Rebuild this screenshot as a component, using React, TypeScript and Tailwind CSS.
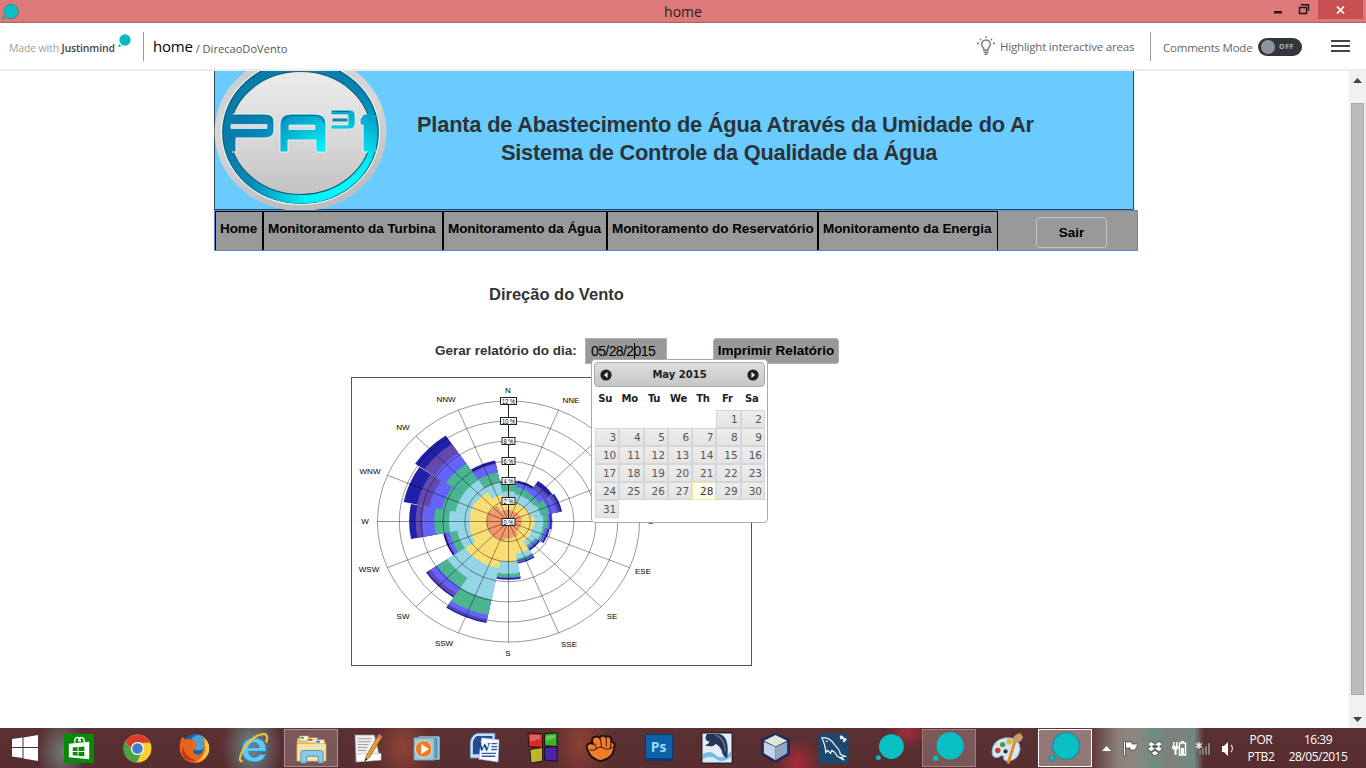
import React from "react";

const COLORS = ["#f5976a", "#fbdf75", "#94d5e6", "#4bb592", "#6464f8", "#6249b0", "#2020a8"];

// Cumulative percentages per direction, clockwise from north.
const ROSE: number[][] = [
  [1.2, 2.0, 3.0, 3.85, 3.9, 3.95, 4.05],
  [1.1, 1.95, 2.8, 3.5, 3.85, 3.95, 4.15],
  [1.15, 2.0, 2.8, 3.35, 4.1, 4.45, 4.85],
  [1.2, 2.1, 3.0, 3.8, 4.5, 4.8, 5.0],
  [1.2, 2.4, 3.2, 3.65, 3.8, 3.85, 3.98],
  [1.2, 2.3, 3.2, 3.4, 3.65, 3.7, 3.85],
  [1.2, 2.4, 2.9, 3.1, 3.3, 3.35, 3.5],
  [1.6, 3.3, 3.8, 4.0, 4.15, 4.18, 4.3],
  [1.7, 4.0, 5.2, 5.55, 5.62, 5.65, 5.8],
  [1.95, 4.75, 7.9, 9.5, 10.05, 10.15, 10.3],
  [2.0, 4.75, 6.75, 7.9, 8.6, 8.95, 9.1],
  [2.0, 3.65, 4.8, 5.5, 5.85, 5.95, 6.1],
  [2.0, 3.55, 5.45, 6.8, 7.9, 8.5, 9.1],
  [2.0, 3.6, 4.95, 6.2, 7.4, 8.55, 9.8],
  [1.9, 3.5, 4.95, 6.9, 8.2, 9.3, 10.3],
  [1.2, 2.7, 4.0, 5.0, 5.8, 5.95, 6.2],
];

const CX = 156.5;
const CY = 143.5;
const UX = 10.92;
const UY = 10.05;

function pt(r: number, deg: number) {
  const a = (deg * Math.PI) / 180;
  return `${(CX + r * UX * Math.sin(a)).toFixed(2)} ${(CY - r * UY * Math.cos(a)).toFixed(2)}`;
}

// The sector spans are widened slightly near the centre so inner bands join.
function wedge(r: number, dir: number, half: number) {
  const a = dir * 22.5;
  return `M${CX} ${CY}L${pt(r, a - half)}A${r * UX} ${r * UY} 0 0 1 ${pt(r, a + half)}Z`;
}

const LABELS: [string, number, number][] = [
  ["N", 156, 15], ["NNE", 219, 25], ["E", 299, 146], ["ESE", 291, 196], ["SE", 260, 241], ["SSE", 217, 269],
  ["S", 156, 278], ["SSW", 92, 268], ["SW", 51, 241], ["WSW", 17, 194], ["W", 13, 146], ["WNW", 18, 96],
  ["NW", 51, 52], ["NNW", 94, 24],
];

function WindRose() {
  return (
    <svg width="399" height="287" viewBox="0 0 399 287" className="block">
      {[6, 5, 4, 3, 2, 1, 0].map((k) =>
        ROSE.map((s, d) => <path key={`${d}-${k}`} d={wedge(s[k], d, k < 3 ? 11.4 : 11.1)} fill={COLORS[k]} />)
      )}
      <g fill="none" stroke="#000" strokeOpacity="0.45" strokeWidth="0.9">
        {[2, 4, 6, 8, 10, 12].map((r) => (
          <ellipse key={r} cx={CX} cy={CY} rx={r * UX} ry={r * UY} />
        ))}
        {Array.from({ length: 16 }, (_, i) => (
          <path key={i} d={`M${CX} ${CY}L${pt(12, i * 22.5)}`} />
        ))}
      </g>
      <path d={`M${CX} ${CY}V23`} stroke="#222" />
      {[0, 2, 4, 6, 8, 10, 12].map((r) => {
        const w = r > 9 ? 16 : 13;
        return (
          <g key={r}>
            <rect x={CX - w / 2} y={Math.round(CY - r * UY) - 3.5} width={w} height="7" fill="#fff" stroke="#222" strokeWidth="1" />
            <text x={CX} y={Math.round(CY - r * UY) + 2.7} fontSize="7.5" textAnchor="middle" fontFamily="Liberation Sans" fill="#000" textLength={w - 3} lengthAdjust="spacingAndGlyphs">
              {r} %
            </text>
          </g>
        );
      })}
      {LABELS.map(([t, x, y]) => (
        <text key={t} x={x} y={y} fontSize="8" textAnchor="middle" fontFamily="Liberation Sans, sans-serif" fill="#000">
          {t}
        </text>
      ))}
    </svg>
  );
}

function Bubble({ size, outline = false }: { size: number; outline?: boolean }) {
  return (
    <svg width={size} height={size} viewBox="0 0 32 32">
      <g fill="#08c0c4" stroke={outline ? "#3b8790" : "none"} strokeWidth="1.6">
        <circle cx="4.5" cy="26.5" r="2.5" />
        <circle cx="18" cy="15" r="12.800" />
      </g>
    </svg>
  );
}

function Logo() {
  return (
    <svg width="174" height="141" viewBox="214 70 174 141" className="block shrink-0">
      <defs>
        <linearGradient id="rim" x1="0" y1="0" x2="0.3" y2="1">
          <stop offset="0" stopColor="#c4c8ca" />
          <stop offset="0.5" stopColor="#d8d8d8" />
          <stop offset="1" stopColor="#bbbfc1" />
        </linearGradient>
        <linearGradient id="disc" x1="0" y1="0" x2="0" y2="1">
          <stop offset="0" stopColor="#ebebeb" />
          <stop offset="0.5" stopColor="#dadada" />
          <stop offset="1" stopColor="#c3c3c3" />
        </linearGradient>
        <radialGradient id="cyan" gradientUnits="userSpaceOnUse" cx="335" cy="180" r="115">
          <stop offset="0" stopColor="#00fcff" />
          <stop offset="0.3" stopColor="#03eff8" />
          <stop offset="0.75" stopColor="#0886b8" />
          <stop offset="1" stopColor="#087caa" />
        </radialGradient>
      </defs>
      <ellipse cx="300.5" cy="132" rx="86" ry="79" fill="url(#rim)" />
      <ellipse cx="300.5" cy="132.500" rx="79" ry="72" fill="#086783" stroke="#eef3f4" strokeWidth="1.2" />
      <ellipse cx="300.500" cy="133" rx="77" ry="70.500" fill="url(#cyan)" />
      <ellipse cx="300.500" cy="133" rx="70.500" ry="61.500" fill="url(#disc)" stroke="#12637a" strokeWidth="1.200" />
      <path d="M226 115H234V152H226ZM369 115H376V152H366Z" fill="url(#cyan)" />
      <g fill="url(#cyan)">
        <path d="M229 114H265Q274 114 274 122V130Q274 138 265 138H236V152H229Z" />
        <path d="M280 152V123Q281 114 291 114H315Q326 114 326 124V152H316V140H288V152Z" stroke="#edf3f4" strokeWidth="0.900" />
        <path d="M331 110H349Q355 110 355 115V124Q355 129 349 129H331V125H348V122H332V118H348V115H331Z" stroke="#edf3f4" strokeWidth="0.700" />
        <path d="M360 119L364 114H369V152H363V125H360Z" />
      </g>
      <path d="M332 118H348V122H332ZM331 115H348" fill="#1588a5" stroke="#e4eeee" strokeWidth="0.900" />
      <path d="M233 114H265Q274 114 274 122V130Q274 138 265 138H236V152H232M367 114H364L360 119V125H363V152H368" fill="none" stroke="#edf3f4" strokeWidth="1" />
      <path d="M231 124.500H267V128.500H231Z" fill="#d9dcdd" stroke="#f4f4f4" strokeWidth="0.700" />
      <path d="M289 125H315V129.500H289Z" fill="#d9dcdd" stroke="#e9f5f5" strokeWidth="0.700" />
      <path d="M234 115.500H265Q272 116 272 122M283 122Q284 116 291 115.500H315Q323 116 324 123M333 111.500H349" fill="none" stroke="#06708e" strokeWidth="1.200" />
    </svg>
  );
}

const NAV: [string, string][] = [
  ["Home", "w-[48px]"],
  ["Monitoramento da Turbina", "w-[180px]"],
  ["Monitoramento da Água", "w-[164px]"],
  ["Monitoramento do Reservatório", "w-[211px]"],
  ["Monitoramento da Energia", "w-[180px]"],
];

function Round({ flip = false }: { flip?: boolean }) {
  return (
    <svg width="12" height="12" viewBox="0 0 12 12" className={flip ? "rotate-180" : ""}>
      <circle cx="6" cy="6" r="5.600" fill="#222" />
      <path d="M7.500 3L4 6L7.500 9Z" fill="#fff" />
    </svg>
  );
}

function Calendar() {
  return (
    <div className="absolute left-[591px] top-[288px] h-[164px] w-[177px] rounded-[4px] border border-[#aaa] bg-white p-[2px] font-['DejaVu_Sans',sans-serif]">
      <div className="flex h-[25px] items-center justify-between rounded-[4px] border border-[#aaa] bg-linear-to-b from-[#dedede] to-[#c6c6c6] px-[5px]">
        <Round />
        <span className="text-[10px] font-bold text-[#222]">May 2015</span>
        <Round flip />
      </div>
      <div className="mt-[1px] grid h-[21px] grid-cols-7 items-center text-center text-[10px] font-bold tracking-[-0.300px] text-[#222]">
        {["Su", "Mo", "Tu", "We", "Th", "Fr", "Sa"].map((d) => (
          <span key={d} className="pr-[2px]">{d}</span>
        ))}
      </div>
      <div className="mt-[1px] ml-[1px] grid auto-rows-[18px] grid-cols-7 text-[10.500px] text-[#555]">
        <span className="col-span-5" />
        {Array.from({ length: 31 }, (_, i) => i + 1).map((d) => (
          <span
            key={d}
            className={
              d === 28
                ? "flex items-center justify-end border border-[#f3e9a0] bg-[#fffcee] pt-[2px] pr-[2px] text-[#363636]"
                : "flex items-center justify-end border border-[#d6d6d6] bg-linear-to-b from-[#ededed] to-[#e4e4e4] pt-[2px] pr-[2px]"
            }
          >
            {d}
          </span>
        ))}
      </div>
    </div>
  );
}

const icon = "block h-[33px] w-[33px]";

const APPS: { name: string; art: React.ReactNode }[] = [
  {
    name: "store",
    art: (
      <svg className={icon} viewBox="0 0 34 34">
        <path fill="#078a07" d="M1 2h31v30H1z" />
        <path d="M12 11C12 4 17 4 18 10M16 10C17 4 22 4 22 11" fill="none" stroke="#fff" strokeWidth="1.400" />
        <path d="M6 12L27 10V28L6 26Z" fill="#fff" />
        <path d="M10 16l5-.5v4h-5zM16 15.400l6-.5v4.600h-6zM10 20.500h5v4l-5-.5zM16 20.500h6v4.600l-6-.5z" fill="#078a07" />
      </svg>
    ),
  },
  {
    name: "chrome",
    art: (
      <svg className={icon} viewBox="0 0 34 34">
        <circle cx="17" cy="17" r="14.400" fill="#f8cf35" />
        <path d="M4.500 10A14.400 14.400 0 0 1 30 11H17A6 6 0 0 0 11 18Z" fill="#da3b2d" />
        <path d="M4.500 10A14.400 14.400 0 0 0 16 31.400L22 20A6 6 0 0 1 11.500 19.500Z" fill="#46a445" />
        <circle cx="17" cy="17" r="6.800" fill="#f5f5f5" />
        <circle cx="17" cy="17" r="5.400" fill="#3d7dcb" />
      </svg>
    ),
  },
  {
    name: "firefox",
    art: (
      <svg className={icon} viewBox="0 0 34 34">
        <circle cx="17" cy="16" r="14" fill="#1a62a8" />
        <circle cx="20" cy="11" r="8" fill="#4aa2dd" />
        <path d="M3 5L7 8Q13 6 16 10L20 13Q16 14 17 17Q12 20 17 23Q24 25 25 17Q28 10 23 4Q32 9 31 18Q29 31 17 32Q4 31 1 20Q0 12 3 5Z" fill="#e7661b" />
        <path d="M26 6Q34 13 30 23Q25 31 17 31Q26 26 27 18Z" fill="#f8c63b" />
        <path d="M4 14Q5 26 17 29Q7 32 3 22Z" fill="#be351a" />
      </svg>
    ),
  },
  {
    name: "ie",
    art: (
      <svg className={icon} viewBox="0 0 34 34">
        <path d="M30 20H12Q13 26 18 26Q22 26 23 23H30Q27 31 18 31Q5 30 5 18Q6 6 18 6Q31 7 30 20ZM12 16H23Q22 11 18 11Q13 11 12 16Z" fill="#62c8f0" stroke="#1c7fb6" strokeWidth="0.800" />
        <path d="M6 30Q0 31 6 19Q16 3 27 2Q33 2 30 11" fill="none" stroke="#f2c331" strokeWidth="2.200" />
      </svg>
    ),
  },
  {
    name: "explorer",
    art: (
      <svg className={icon} viewBox="0 0 34 34">
        <path d="M3 6h9l1 3h18v19H2V9Z" fill="#e4c878" />
        <path d="M5 4h9v5H5zM13 6h10v5H13zM20 8h10v5H20z" fill="#fff8dc" stroke="#b49a52" strokeWidth="0.500" />
        <path d="M6 5h3v2H6z" fill="#1ba73b" /><path d="M14 7h4v2h-4z" fill="#e23c27" /><path d="M22 9h4v2h-4z" fill="#3689cf" />
        <path d="M2 12h30v18H2Z" fill="#f7e5a5" stroke="#c6a85c" strokeWidth="0.700" />
        <path d="M6 32V21Q6 19 9 19H26Q29 19 29 21V32H24V25H12V32Z" fill="#8bc8ea" stroke="#478db6" strokeWidth="0.900" />
      </svg>
    ),
  },
  {
    name: "notepad",
    art: (
      <svg className={icon} viewBox="0 0 34 34">
        <path d="M2 3H22L28 27L3 31Z" fill="#eee" stroke="#888" strokeWidth="0.700" />
        <path d="M5 7h14M5 10h13M5 13h11M5 16h10M5 19h9" stroke="#9a9a9a" strokeWidth="1" />
        <path d="M3 23L29 22V29L4 31Z" fill="#fff" stroke="#999" strokeWidth="0.500" />
        <path d="M27 2L30 5L17 26L12 30L14 24Z" fill="#e8a02a" stroke="#7b5420" strokeWidth="0.700" />
        <path d="M27 2L30 5L28 8L25 5Z" fill="#d97662" /><path d="M12 30L13 27L15 28Z" fill="#222" />
      </svg>
    ),
  },
  {
    name: "player",
    art: (
      <svg className={icon} viewBox="0 0 34 34">
        <path d="M8 5H29V28H8Z" fill="#76b6d8" stroke="#d2ecf5" strokeWidth="0.800" />
        <path d="M26 6V27" stroke="#277fa9" />
        <path d="M3 6H24V29H3Z" fill="#9cc8d8" stroke="#538fa5" strokeWidth="0.800" />
        <circle cx="13" cy="17.500" r="8.500" fill="#ee7b24" stroke="#eed7c5" />
        <path d="M10.500 12L18.500 17.500L10.500 23Z" fill="#fff" />
      </svg>
    ),
  },
  {
    name: "word",
    art: (
      <svg className={icon} viewBox="0 0 34 34">
        <path d="M9 1H27L26 27H1V10Q3 2 9 1Z" fill="#cddff2" stroke="#365f9d" />
        <path d="M8 4H24V23H4V11Q5 6 8 4Z" fill="#214d95" />
        <path d="M13 6L31 8L30 31L10 28Z" fill="#f8fbff" stroke="#8aa8ce" strokeWidth="0.600" />
        <text x="9" y="20" fontSize="13" fontWeight="bold" fill="#164491" fontFamily="Liberation Serif">W</text>
        <path d="M23 12h6M23 15h6M23 18h6M13 22h15M13 25h14" stroke="#2f59a1" strokeWidth="1.400" />
      </svg>
    ),
  },
  {
    name: "blocks",
    art: (
      <svg className={icon} viewBox="0 0 34 34">
        <path d="M1 1L16 2V16L2 15Z" fill="#d82b24" stroke="#2c0b0b" /><path d="M18 2L31 1V15L18 14Z" fill="#3cb52a" stroke="#111" />
        <path d="M3 18L16 16V30L4 32Z" fill="#c3b32a" stroke="#191919" /><path d="M18 16L31 15V30L18 29Z" fill="#4b25a7" stroke="#150c31" />
        <path d="M3 3L14 3V7L3 10ZM20 4L29 3V6L20 9Z" fill="#fff" opacity="0.250" />
      </svg>
    ),
  },
  {
    name: "fist",
    art: (
      <svg className={icon} viewBox="0 0 34 34">
        <path d="M3 19Q0 14 4 12Q6 11 8 12Q6 6 10 5Q14 4 15 6Q18 2 21 5Q25 3 27 7L27 10Q32 11 30 17Q29 27 16 30Q5 27 3 19Z" fill="#ef7d2b" stroke="#1c0e09" strokeWidth="2" />
        <path d="M5 18Q9 20 12 17Q16 14 20 17Q25 19 29 15M10 12L12 17M16 7L17 15M22 6L22 15M27 10L26 17" stroke="#5e230e" strokeWidth="1.200" fill="none" />
      </svg>
    ),
  },
  {
    name: "photoshop",
    art: (
      <svg className={icon} viewBox="0 0 34 34">
        <path d="M2 4L4 2H31V27L28 30H2Z" fill="#063b73" /><path d="M3 3H30V27H3Z" fill="#0c61a8" />
        <text x="8" y="21" fontSize="14" fontWeight="bold" fill="#9bdbfa" fontFamily="Open Sans, sans-serif" textLength="16" lengthAdjust="spacingAndGlyphs">Ps</text>
      </svg>
    ),
  },
  {
    name: "dolphin",
    art: (
      <svg className={icon} viewBox="0 0 34 34">
        <path d="M1 1H32V32H1Z" fill="#e2eff9" stroke="#111" />
        <path d="M2 23Q9 18 14 23T24 25T31 20V31H2Z" fill="#79b9e4" />
        <path d="M2 28Q9 23 16 28T31 25V31H2Z" fill="#fff" opacity=".7" />
        <path d="M6 2H19Q26 4 27 12Q28 17 27 27Q22 25 21 18Q19 14 15 12Q13 16 4 14Q8 12 9 10Q2 9 6 2Z" fill="#263755" />
        <path d="M15 3Q25 7 25 20" stroke="#61789b" strokeWidth="1.500" fill="none" />
      </svg>
    ),
  },
  {
    name: "cube",
    art: (
      <svg className={icon} viewBox="0 0 34 34">
        <path d="M17 2L31 8V23L17 31L3 23V8Z" fill="#1c2854" stroke="#242b56" strokeWidth="2" strokeLinejoin="round" />
        <path d="M17 3L29 9L17 15L5 9Z" fill="#dce6db" /><path d="M5 10L17 15.500V29L5 22Z" fill="#c2d2e9" /><path d="M29 10L17 15.500V29L29 22Z" fill="#8fa7c6" />
      </svg>
    ),
  },
  {
    name: "workbench",
    art: (
      <svg className={icon} viewBox="0 0 34 34">
        <rect x="1.500" y="1.500" width="31" height="31" rx="2" fill="#1b486c" />
        <path d="M5 6Q13 5 18 13Q24 19 24 23L29 25L25 26L28 29L21 25Q18 20 15 19L14 22L11 19L9 21Q9 15 5 6ZM9 9l2 1" fill="none" stroke="#eaf4f9" strokeWidth="1.300" />
        <path d="M24 4L29 8M24 7L27 5M27 10L30 7" stroke="#fff" strokeWidth="2" />
      </svg>
    ),
  },
  { name: "bubble", art: <div className="-mt-[2px] -ml-[4px]"><Bubble size={31} /></div> },
  { name: "bubble-open", art: <div className="-mt-[2px] -ml-[3px]"><Bubble size={34} /></div> },
  {
    name: "paint",
    art: (
      <svg className={icon} viewBox="0 0 34 34">
        <path d="M15 6Q30 5 30 18Q28 30 16 30Q12 29 13 25Q11 23 8 26Q1 28 1 20Q2 8 15 6Z" fill="#d3e7f4" stroke="#8aacbd" />
        <circle cx="7" cy="19" r="2.800" fill="#d2372f" /><circle cx="12" cy="13" r="2.800" fill="#4aa13b" /><circle cx="19" cy="10" r="3" fill="#edb830" /><circle cx="15" cy="20" r="2.200" fill="#3a2f3a" />
        <path d="M26 10L19 33L16 32L23 10Z" fill="#e58a26" /><path d="M22 10Q22 3 30 1L33 5Q32 10 27 11Z" fill="#c59b67" />
      </svg>
    ),
  },
  { name: "bubble-active", art: <div className="-mt-[2px] -ml-[2px]"><Bubble size={34} outline /></div> },
];

function cellClass(name: string) {
  if (name === "explorer") return "border border-[#aa8f91] bg-white/20";
  if (name === "bubble-open") return "border border-[#a67b7e] bg-white/20";
  if (name === "bubble-active") return "border border-[#fff] bg-white/35";
  return "";
}

function Taskbar() {
  return (
    <footer className="flex h-[40px] items-center bg-[radial-gradient(ellipse_25px_35px_at_62px_24px,#6f7a76,transparent),radial-gradient(ellipse_30px_45px_at_252px_20px,#70878b,transparent),radial-gradient(ellipse_30px_40px_at_403px_20px,#914334,transparent),radial-gradient(ellipse_30px_50px_at_580px_15px,#8d4035,transparent),radial-gradient(ellipse_25px_25px_at_797px_35px,#a72b36,transparent),radial-gradient(ellipse_20px_15px_at_907px_5px,#a32e38,transparent),linear-gradient(90deg,transparent_1088px,#8a817b_1118px,#8c8781_1135px,#6d8d82_1155px,#817f7a_1170px,#718984_1194px,transparent_1204px),linear-gradient(#5b3033,#572d2f)] font-['Open_Sans',sans-serif] text-white">
      <div className="flex w-[50px] justify-center">
        <svg width="28" height="28" viewBox="0 0 28 28">
          <path d="M1 5L11.500 3.500V13H1ZM12.500 3.400L27 1V13H12.500ZM1 14H11.500V24L1 22.500ZM12.500 14H27V27L12.500 24.500Z" fill="#fff" />
        </svg>
      </div>
      {APPS.map((a) => (
        <div key={a.name} className="flex h-[40px] w-[58px] shrink-0 items-center justify-center">
          <div className={`flex h-[38px] w-[54px] items-center justify-center ${cellClass(a.name)}`}>{a.art}</div>
        </div>
      ))}
      <svg width="144" height="40" viewBox="1094 728 144 40" className="shrink-0">
        <path d="M1102 751L1106.500 746L1111 751Z" fill="#fff" />
        <g fill="#fff" stroke="#3c3535" strokeWidth="0.700">
          <path d="M1123.500 741H1125.500V756H1123.500ZM1125.500 742H1132V744H1138L1135 750H1130V748H1125.500Z" />
          <path d="M1147.500 744L1151 741.500L1155 744L1159 741.500L1162.500 744L1159.500 746.500L1162.500 749L1159 751.500L1155 749L1151 751.500L1147.500 749L1150.500 746.500ZM1155 750.500L1159 753L1155 756L1151 753Z" />
        </g>
        <path d="M1155 744.200L1158.700 746.500L1155 748.800L1151.300 746.500Z" fill="#576866" />
        <rect x="1179.500" y="743" width="6" height="12" fill="none" stroke="#fff" strokeWidth="1.500" />
        <path d="M1181 741h3v1.500h-3zM1181 748h3v6h-3zM1173 742h1.500v4H1173zM1176 742h1.500v4H1176zM1172 746h6.500v2.500l-2 1.500v5h-2v-5l-2.500-1.500z" fill="#fff" />
        <path d="M1196 755V753h2v2zM1199 755v-5h2v5zM1202 755v-7h2v7zM1205 755v-9h2v9zM1208 755v-12h2v12z" fill="#a29c9b" stroke="#3b3434" strokeWidth="0.500" />
        <path d="M1199 742v7M1196 743.500l6 4M1202 743.500l-6 4" stroke="#fff" strokeWidth="1.200" />
        <path d="M1222 746h2l4-4v14l-4-4h-2z" fill="#fff" />
        <path d="M1231 745q3 3.500 0 7" fill="none" stroke="#ddd" strokeWidth="1.200" />
      </svg>
      <div className="ml-[6px] w-[34px] text-center text-[12px] leading-[17px] tracking-[-0.400px]">
        POR
        <br />
        PTB2
      </div>
      <div className="ml-[7px] w-[66px] text-center text-[12px] leading-[17px] tracking-[-0.500px] whitespace-nowrap">
        16:39
        <br />
        28/05/2015
      </div>
    </footer>
  );
}

export default function App() {
  return (
    <div className="flex h-[768px] w-[1366px] flex-col overflow-hidden bg-white font-['Liberation_Sans',Arial,sans-serif] whitespace-nowrap">
      <header className="flex h-[23px] shrink-0 items-start border-b border-[#a86468] bg-[#dd7979]">
        <div className="w-[30px] pt-[3px] pl-[1px]">
          <Bubble size={18} outline />
        </div>
        <h1 className="w-[1306px] text-center font-['Open_Sans',sans-serif] text-[14px] leading-[23px] text-[#2c1d1d]">home</h1>
        <div className="-ml-[65px] flex shrink-0 items-start">
          <svg width="47" height="20" viewBox="1271 0 47 20">
            <path d="M1274 11h8v2.500h-8z" fill="#231818" />
            <path d="M1299.500 7.500h7v6h-7zM1301 4.700h7.500V11" fill="none" stroke="#231818" strokeWidth="1.400" />
          </svg>
          <div className="flex h-[19px] w-[45px] items-center justify-center bg-[#c75050]">
            <svg width="9" height="8" viewBox="0 0 9 8"><path d="M1 .5L8 7.500M8 .5L1 7.500" stroke="#fff" strokeWidth="1.700" /></svg>
          </div>
        </div>
      </header>

      <div className="flex h-[48px] shrink-0 items-center border-b-2 border-[#ececec] font-['Open_Sans',sans-serif] text-[#666]">
        <p className="w-[107px] pt-[5px] pl-[9px] text-[10.500px] tracking-[-0.150px] text-[#a0a0a0]">
          Made with <b className="font-semibold text-[#444]">Justinmind</b>
        </p>
        <svg width="15" height="16" viewBox="0 0 15 16" className="mt-[-10px] ml-[10px]">
          <circle cx="8" cy="7" r="5.700" fill="#08bcc2" /><circle cx="2.500" cy="12.700" r="1.300" fill="#08bcc2" />
        </svg>
        <div className="ml-[11px] h-[29px] w-px bg-[#999]" />
        <p className="ml-[9px] w-[824px] pt-px text-[11.100px] text-[#555]">
          <span className="text-[15px] tracking-[-0.200px] text-black">home</span> <span className="relative top-px">/ DirecaoDoVento</span>
        </p>
        <svg width="19" height="20" viewBox="0 0 19 20" fill="none" stroke="#777" strokeWidth="1.400">
          <path d="M7 14Q7 12.500 6.200 11.500A4.300 4.300 0 1 1 11.800 11.500Q11 12.500 11 14Z" />
          <path d="M6.500 16.200h5M7.500 18.300h3M9 .3v1.700M3 3L4.200 4.200M15 3L13.800 4.200M0 7.500h2M16 7.500h2" />
        </svg>
        <span className="ml-[4px] w-[150px] pt-[2px] text-[11.500px] tracking-[-0.200px]">Highlight interactive areas</span>
        <div className="h-[29px] w-px bg-[#999]" />
        <span className="ml-[12px] w-[95px] pt-[3px] text-[11.500px] tracking-[-0.220px]">Comments Mode</span>
        <div className="mt-[2px] flex h-[18px] w-[44px] items-center rounded-full bg-[#333638] pl-[3px]">
          <div className="h-[14px] w-[14px] rounded-full bg-[#8d949b]" />
          <span className="ml-[4px] text-[7px] font-bold tracking-[0.600px] text-[#b2b6b8]">OFF</span>
        </div>
        <div className="ml-[29px] flex w-[19px] flex-col gap-[3px]">
          <i className="h-[2px] bg-[#444]" /><i className="h-[2px] bg-[#444]" /><i className="h-[2px] bg-[#444]" />
        </div>
      </div>

      <div className="relative flex h-[657px] shrink-0">
        <main className="flex w-[1349px] flex-col overflow-hidden">
          <section className="ml-[214px] flex h-[139px] w-[920px] shrink-0 border-x border-b border-[#2d4a5b] bg-[#6acbff]">
            <div className="-mt-px -ml-px h-[141px]"><Logo /></div>
            <h2 className="ml-[29px] w-[620px] pt-[40px] text-[21.800px] leading-[28px] font-bold tracking-[-0.190px] text-[#2b3338]">
              <span className="block">Planta de Abastecimento de Água Através da Umidade do Ar</span>
              <span className="block pl-[84px] tracking-[-0.240px]">Sistema de Controle da Qualidade da Água</span>
            </h2>
          </section>
          <nav className="ml-[214px] flex h-[41px] w-[924px] shrink-0 border border-[#5b8ad0] bg-[#999] text-[13.500px] font-bold text-black">
            {NAV.map(([t, w]) => (
              <a key={t} className={`${w} h-[39px] border-x border-t border-black pt-[7px] pl-[4px] leading-[20px] tracking-[-0.080px]`}>
                {t}
              </a>
            ))}
            <button className="mt-[6px] ml-[38px] h-[31px] w-[71px] rounded-[4px] border border-[#c5c5c5] pt-[2px] font-bold">Sair</button>
          </nav>
          <h3 className="mt-[33px] ml-[489px] text-[16.500px] leading-[20px] font-bold text-[#333]">Direção do Vento</h3>
          <div className="mt-[34px] ml-[435px] flex h-[26px] shrink-0 items-center">
            <label className="w-[150px] text-[13.500px] font-bold text-[#333]">Gerar relatório do dia:</label>
            <div className="flex h-[26px] w-[82px] items-center border border-[#b0b0b0] bg-[#999] pl-[5px] text-[14px] tracking-[-0.600px] text-black">
              05/28/2<span className="-mr-px h-[16px] w-px bg-black" />015
            </div>
            <button className="ml-[46px] h-[26px] w-[126px] rounded-[3px] border border-[#b0b0b0] bg-[#999] pt-px text-[13.500px] font-bold text-black">
              Imprimir Relatório
            </button>
          </div>
          <figure className="mt-[13px] ml-[351px] h-[289px] w-[401px] shrink-0 border border-[#555]">
            <WindRose />
          </figure>
        </main>
        <aside className="flex w-[17px] flex-col items-center bg-[#f0f0f0]">
          <svg width="9" height="5" viewBox="0 0 9 5" className="mt-[7px]"><path d="M0 5L4.500 0L9 5Z" fill="#444" /></svg>
          <div className="mt-[20px] h-[592px] w-[13px] border border-[#a8a8a8] bg-[#bcbcbc]" />
          <svg width="9" height="5" viewBox="0 0 9 5" className="mt-[22px]"><path d="M0 0L4.500 5L9 0Z" fill="#444" /></svg>
        </aside>
        <Calendar />
      </div>
      <Taskbar />
    </div>
  );
}
